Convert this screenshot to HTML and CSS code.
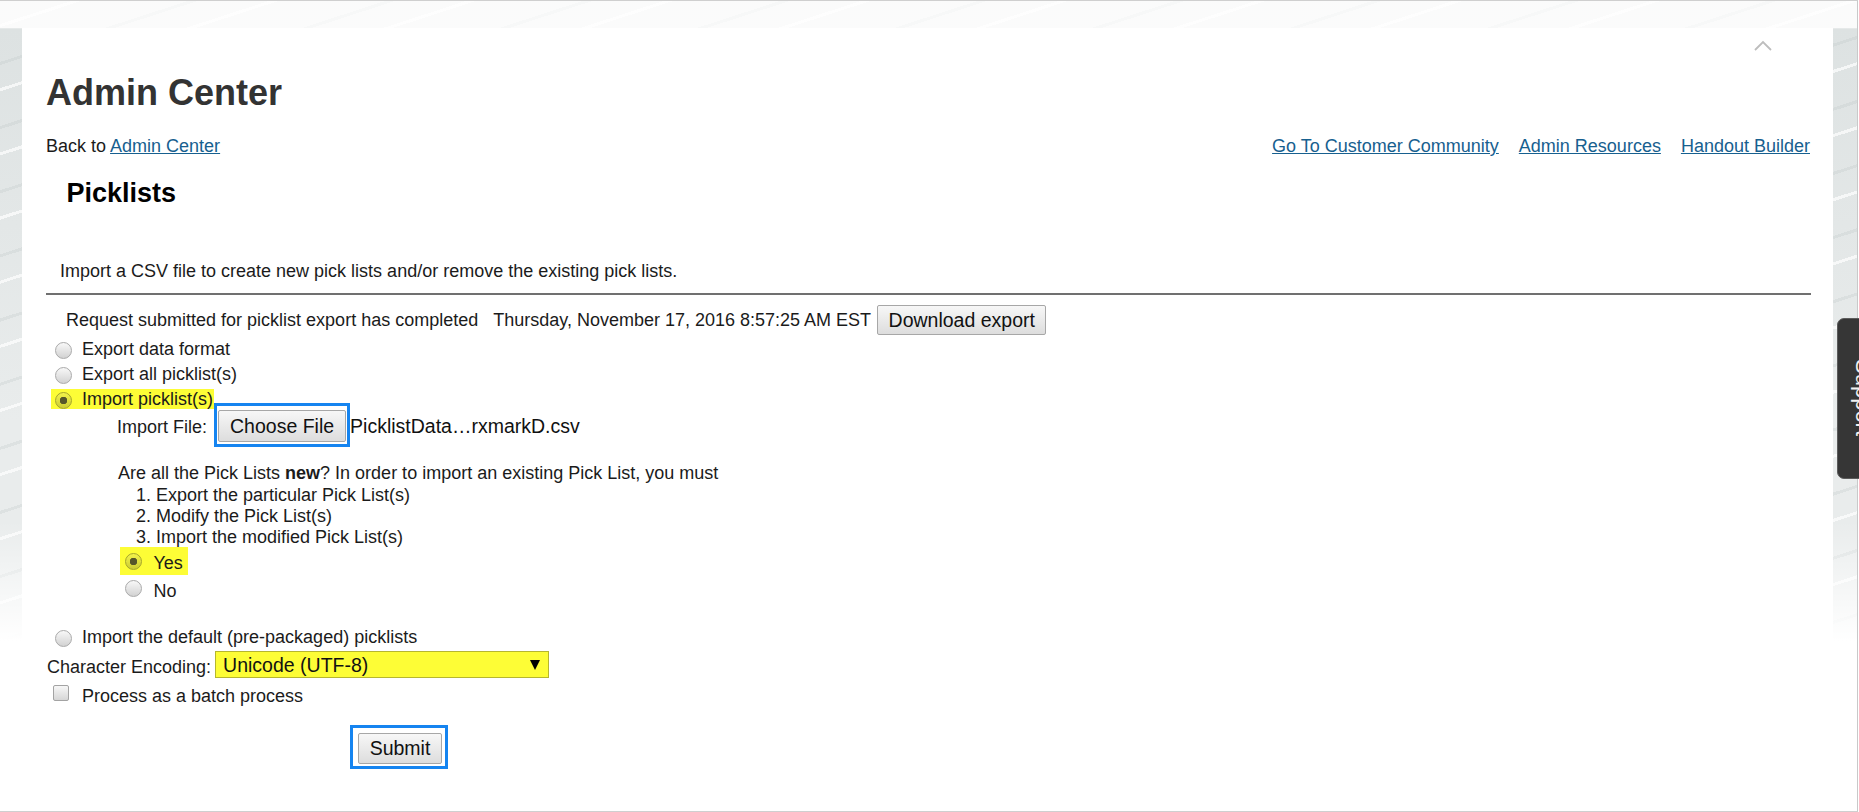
FILE: index.html
```html
<!DOCTYPE html>
<html lang="en">
<head>
    <meta charset="UTF-8">
    <meta name="viewport" content="width=device-width, initial-scale=1.0">
    <title>Picklists - Admin Center</title>
    <link rel="stylesheet" href="styles.css">
</head>
<body>

<div class="frame">
    <div class="panel">
        <div class="topbar">
            <svg class="collapse" width="18" height="11" viewBox="0 0 18 11">
                <path d="M1 10 L9 2 L17 10" fill="none" stroke="#bdbdbd" stroke-width="1.8"/>
            </svg>
        </div>

        <h1 class="title">Admin Center</h1>

        <div class="navrow">
            <div>Back to <a href="#">Admin Center</a></div>
            <div class="links">
                <a href="#">Go To Customer Community</a>
                <a href="#">Admin Resources</a>
                <a href="#">Handout Builder</a>
            </div>
        </div>

        <h2 class="subtitle">Picklists</h2>
        <p class="intro">Import a CSV file to create new pick lists and/or remove the existing pick lists.</p>
        <div class="rule"></div>

        <div class="status">
            <span>Request submitted for picklist export has completed</span>
            <span class="date">Thursday, November 17, 2016 8:57:25 AM EST</span>
            <button class="btn btn-export" type="button">Download export</button>
        </div>

        <form class="picklist-form" onsubmit="return false;">
            <label class="opt first"><input class="radio" type="radio" name="action"><span>Export data format</span></label>
            <label class="opt"><input class="radio" type="radio" name="action"><span>Export all picklist(s)</span></label>
            <label class="opt hl"><input class="radio" type="radio" name="action" checked><span>Import picklist(s)</span></label>

            <div class="filerow">
                <span>Import File:</span>
                <span class="mark mark-file"><button class="btn btn-file" type="button">Choose File</button></span>
                <span class="filename">PicklistData…rxmarkD.csv</span>
            </div>

            <p class="question">Are all the Pick Lists <b>new</b>? In order to import an existing Pick List, you must</p>
            <ol class="steps">
                <li>Export the particular Pick List(s)</li>
                <li>Modify the Pick List(s)</li>
                <li>Import the modified Pick List(s)</li>
            </ol>
            <label class="yn yes hl"><input class="radio" type="radio" name="isnew" checked><span>Yes</span></label>
            <label class="yn no"><input class="radio" type="radio" name="isnew"><span>No</span></label>

            <label class="opt spaced"><input class="radio" type="radio" name="action"><span>Import the default (pre-packaged) picklists</span></label>

            <div class="enc">
                <span class="enc-label">Character Encoding:</span>
                <span class="select">
                    <select>
                        <option>Unicode (UTF-8)</option>
                        <option>Western European (ISO-8859-1)</option>
                    </select>
                </span>
            </div>

            <label class="check"><input class="box" type="checkbox"><span>Process as a batch process</span></label>

            <span class="mark mark-submit"><button class="btn btn-submit" type="submit">Submit</button></span>
        </form>
    </div>

    <div class="support">Support</div>
</div>

</body>
</html>
```

FILE: styles.css
```css
html {
    overflow: hidden;
}
body {
    margin: 0;
    font-family: "Liberation Sans", Arial, sans-serif;
    font-size: 18px;
    color: #1b1b1b;
    background-color: #fff;
}
.frame {
    box-sizing: border-box;
    width: 1858px;
    height: 812px;
    padding: 27px 0 0 22px;
    border-top: 1px solid #cfcfcf;
    border-right: 1px solid #c9c9c9;
    border-bottom: 1px solid #cfcfcf;
    background:
        linear-gradient(180deg, rgba(255, 255, 255, 0.75) 0, rgba(255, 255, 255, 0.75) 27px, rgba(255, 255, 255, 0) 27px),
        linear-gradient(180deg, rgba(255, 255, 255, 0) 0, rgba(255, 255, 255, 0) 520px, #fff 640px),
        repeating-linear-gradient(162deg, rgba(255, 255, 255, 0) 0 22px, rgba(255, 255, 255, 0.7) 22px 25px, rgba(255, 255, 255, 0) 25px 58px, rgba(185, 194, 194, 0.25) 58px 61px),
        linear-gradient(180deg, #eef0f0 0, #eef0f0 27px, #dde2e2 28px, #e9ecec 420px);
}
.panel {
    box-sizing: border-box;
    width: 1811px;
    height: 783px;
    padding: 0 22px 0 24px;
    background-color: #fff;
}
.topbar {
    display: flex;
    justify-content: flex-end;
    height: 32px;
}
.collapse {
    margin: 12px 39px 0 0;
}
.title {
    margin: 12px 0 0;
    font-size: 36px;
    line-height: 42px;
    font-weight: bold;
    color: #333;
}
.navrow {
    display: flex;
    justify-content: space-between;
    margin-top: 22px;
    line-height: 21px;
}
a {
    color: #17608f;
    text-decoration: underline;
}
.links {
    padding-right: 1px;
}
.links a {
    margin-left: 15px;
}
.subtitle {
    margin: 21px 0 0 20.5px;
    font-size: 27px;
    line-height: 31px;
    color: #000;
}
.intro {
    margin: 52px 0 0;
    padding-left: 14px;
    line-height: 21px;
}
.rule {
    height: 2px;
    margin-top: 11px;
    background-color: #707070;
}
.status {
    display: flex;
    align-items: center;
    height: 30px;
    margin-top: 10px;
    padding-left: 20px;
    line-height: 21px;
}
.date {
    margin-left: 15px;
}
.btn {
    box-sizing: border-box;
    height: 31px;
    padding: 0 10px;
    font-family: "Liberation Sans", Arial, sans-serif;
    font-size: 19.5px;
    color: #111;
    background: linear-gradient(#f7f7f7, #dddddd);
    border: 1px solid #a7a7a7;
    border-radius: 2px;
    cursor: pointer;
}
.btn-export {
    height: 30px;
    margin-left: 6px;
    padding: 0 10.5px;
}
.btn-file {
    height: 32px;
    padding: 0 11px;
}

/* radio rows */
.opt {
    display: flex;
    align-items: center;
    width: fit-content;
    height: 20px;
    margin: 5px 0 0 5px;
    padding: 0 1px 0 4px;
    line-height: 20px;
}
.opt.first {
    margin-top: 4px;
}
.opt.spaced {
    margin-top: 24px;
}
.radio {
    -webkit-appearance: none;
    appearance: none;
    box-sizing: border-box;
    flex: none;
    width: 17px;
    height: 17px;
    margin: 2px 10px 0 0;
    border: 1px solid #aaa;
    border-radius: 50%;
    background: linear-gradient(#f8f8f8, #d2d2d2);
}
.radio:checked {
    background: radial-gradient(circle, #4e4e4e 0 3.5px, rgba(0, 0, 0, 0) 4px), linear-gradient(#f8f8f8, #d2d2d2);
}
.hl {
    background-color: #fdfd36;
}
.hl .radio {
    border-color: #a5a52c;
    background: linear-gradient(#f3f34a, #cccc33);
}
.hl .radio:checked {
    background: radial-gradient(circle, #56562a 0 3.5px, rgba(0, 0, 0, 0) 4px), linear-gradient(#f3f34a, #cccc33);
}

/* file chooser */
.filerow {
    display: flex;
    align-items: baseline;
    margin-top: 1px;
    padding-left: 71px;
    line-height: 21px;
}
.mark {
    display: flex;
    border: 3px solid #1584f0;
}
.mark-file {
    margin: -7px 0 -5px 7px;
    padding: 4px 1px 2px 1px;
}
.filename {
    font-size: 19.5px;
    color: #111;
}

.question {
    margin: 21px 0 0 72px;
    line-height: 21px;
}
.steps {
    margin: 1px 0 0 72px;
    padding-left: 38px;
    line-height: 21px;
}

.yn {
    display: flex;
    align-items: flex-start;
    width: fit-content;
    height: 28px;
    margin-left: 74px;
    padding: 0 5px 0 4.5px;
    line-height: 21px;
}
.yn.yes {
    margin-top: -1px;
}
.yn .radio {
    margin: 6px 12px 0 0;
}
.yn.no .radio {
    margin-top: 5px;
}
.yn span {
    margin-top: 6px;
}

/* encoding select */
.enc {
    display: flex;
    align-items: flex-end;
    margin-top: 4px;
    line-height: 21px;
}
.enc-label {
    margin-left: 1px;
}
.select {
    position: relative;
    display: block;
    width: 334px;
    height: 27px;
    margin-left: 4px;
}
.select select {
    -webkit-appearance: none;
    appearance: none;
    box-sizing: border-box;
    width: 100%;
    height: 100%;
    margin: 0;
    padding: 0 0 0 7px;
    font-family: "Liberation Sans", Arial, sans-serif;
    font-size: 19.5px;
    color: #111;
    background-color: #fdfd36;
    border: 1px solid #b6b62e;
    border-radius: 0;
}
.select::after {
    content: "";
    position: absolute;
    top: 9px;
    right: 9px;
    border-left: 5.5px solid transparent;
    border-right: 5.5px solid transparent;
    border-top: 10px solid #000;
    pointer-events: none;
}

.check {
    display: flex;
    align-items: flex-start;
    margin-top: 8px;
    line-height: 21px;
}
.box {
    -webkit-appearance: none;
    appearance: none;
    box-sizing: border-box;
    flex: none;
    width: 16px;
    height: 16px;
    margin: -1px 13px 0 7px;
    border: 1px solid #a3a3a3;
    border-radius: 2px;
    background: linear-gradient(#f7f7f7, #d6d6d6);
}

.mark-submit {
    display: inline-flex;
    margin: 18px 0 0 304px;
    padding: 5px 3px 2px 5px;
}
.btn-submit {
    width: 84px;
}

/* side tab */
.support {
    position: fixed;
    top: 318px;
    left: 1837px;
    box-sizing: border-box;
    width: 40px;
    height: 161px;
    padding: 40px 0 0 8px;
    writing-mode: vertical-rl;
    font-size: 22px;
    line-height: 26px;
    color: #f2f2f2;
    background-color: #363636;
    border: 1px solid #5c5c5c;
    border-radius: 7px 0 0 7px;
}
```
